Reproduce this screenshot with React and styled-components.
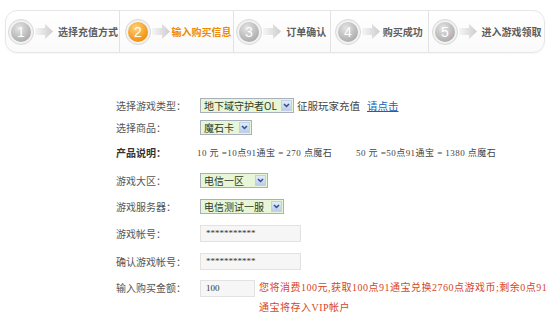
import React from "react";
import styled, { createGlobalStyle } from "styled-components";

const GlobalStyle = createGlobalStyle`
  body {
    margin: 0;
    background: #fff;
    font-family: "Noto Sans CJK SC", "Noto Sans", sans-serif;
  }
`;

const Page = styled.div`
  width: 557px;
  height: 321px;
  overflow: hidden;
  padding-top: 10px;
  box-sizing: border-box;
`;

const StepBar = styled.div`
  display: flex;
  margin-left: 5px;
  width: 540px;
  height: 43px;
  box-sizing: border-box;
  border: 1px solid #e6e6e6;
  border-radius: 12px;
  background: linear-gradient(#ffffff, #fafafa);
  box-shadow: 0 1px 2px rgba(0, 0, 0, 0.04);
`;

const Step = styled.div`
  display: flex;
  align-items: center;
  width: ${(p) => p.w}px;
  padding-left: ${(p) => p.pad}px;
  box-sizing: border-box;
  border-left: ${(p) => (p.first ? "none" : "1px solid #e2e2e2")};
`;

const StepText = styled.span`
  font-size: 10px;
  font-weight: bold;
  color: ${(p) => (p.active ? "#f08a00" : "#5e5e5e")};
  white-space: nowrap;
`;

const ArrowWrap = styled.div`
  display: flex;
  width: ${(p) => p.w}px;
  padding-left: 1px;
`;

function Ball({ n, active }) {
  const id = `g${n}`;
  return (
    <svg width="26" height="26" viewBox="0 0 26 26">
      <defs>
        <radialGradient id={id} cx="40%" cy="30%" r="75%">
          <stop offset="0%" stopColor={active ? "#ffd27a" : "#e4e4e4"} />
          <stop offset="100%" stopColor={active ? "#ef8a00" : "#a8a8a8"} />
        </radialGradient>
      </defs>
      <circle cx="13" cy="13" r="12.5" fill="#f2f2f2" stroke="#d8d8d8" />
      <circle cx="13" cy="13" r="10" fill={`url(#${id})`} />
      <text
        x="13"
        y="18"
        textAnchor="middle"
        fontSize="14"
        fill="#fff"
        fontFamily="Liberation Sans, sans-serif"
      >
        {n}
      </text>
    </svg>
  );
}

function Arrow() {
  return (
    <svg width="18" height="15" viewBox="0 0 18 15">
      <defs>
        <linearGradient id="ar" x1="0" x2="1" y1="0" y2="0">
          <stop offset="0%" stopColor="#f6f6f6" />
          <stop offset="100%" stopColor="#cdcdcd" />
        </linearGradient>
      </defs>
      <polygon points="0,4 10,4 10,0 18,7.5 10,15 10,11 0,11" fill="url(#ar)" />
    </svg>
  );
}

const steps = [
  { n: 1, text: "选择充值方式", w: 113, pad: 2 },
  { n: 2, text: "输入购买信息", w: 115, pad: 5, active: true },
  { n: 3, text: "订单确认", w: 97, pad: 2 },
  { n: 4, text: "购买成功", w: 99, pad: 4 },
  { n: 5, text: "进入游戏领取", w: 116, pad: 3 },
];

const Form = styled.div`
  margin-top: 41px;
  padding-left: 116px;
  font-size: 10px;
  color: #555;
`;

const Row = styled.div`
  display: flex;
  align-items: ${(p) => (p.top ? "flex-start" : "center")};
  height: ${(p) => p.h}px;
  padding-top: ${(p) => p.pt || 0}px;
  box-sizing: border-box;
`;

const Label = styled.div`
  width: ${(p) => p.w || 84}px;
  flex-shrink: 0;
  white-space: nowrap;
  font-weight: ${(p) => (p.bold ? "bold" : "normal")};
  color: ${(p) => (p.bold ? "#333" : "#555")};
  line-height: ${(p) => (p.lh ? p.lh + "px" : "normal")};
`;

const Select = styled.div`
  display: flex;
  align-items: stretch;
  width: ${(p) => p.w}px;
  height: 15px;
  box-sizing: border-box;
  border: 1px solid #a7b0bb;
  background: #e6f6d6;
`;

const SelectText = styled.span`
  flex: 1;
  padding-left: 3px;
  font-size: 10px;
  line-height: 13px;
  color: #2e3a2a;
  white-space: nowrap;
  overflow: hidden;
`;

const SelectBtn = styled.span`
  width: 11px;
  margin: 1px;
  display: flex;
  align-items: center;
  justify-content: center;
  background: linear-gradient(#e2ebf8, #bccde8);
  border: 1px solid #c2cfe4;
  box-sizing: border-box;
`;

function Chevron() {
  return (
    <svg width="7" height="5" viewBox="0 0 7 5">
      <polyline points="1,1 3.5,3.5 6,1" fill="none" stroke="#2d4f8a" strokeWidth="1.5" />
    </svg>
  );
}

const Inline = styled.span`
  margin-left: 3px;
  font-size: 10.5px;
  color: #444;
  white-space: nowrap;
`;

const Link = styled.a`
  margin-left: 7px;
  font-size: 10.5px;
  color: #1c5fb8;
  text-decoration: underline;
  white-space: nowrap;
`;

const Desc = styled.span`
  font-family: "Liberation Serif", "Noto Sans CJK SC", serif;
  font-size: 9px;
  letter-spacing: 0.45px;
  color: #444;
  white-space: nowrap;
  width: ${(p) => p.w}px;
`;

const Input = styled.div`
  width: ${(p) => p.w}px;
  height: 17px;
  margin-top: ${(p) => p.mt || 0}px;
  flex-shrink: 0;
  box-sizing: border-box;
  border: 1px solid #e2e2e2;
  background: #f6f6f6;
  padding-left: 5px;
  font-family: "Liberation Serif", serif;
  font-size: 9px;
  line-height: 15px;
  color: #333;
`;

const Notice = styled.div`
  margin-left: 4px;
  font-family: "Liberation Serif", "Noto Sans CJK SC", serif;
  font-size: 10px;
  letter-spacing: 0.5px;
  line-height: 20px;
  color: #d6461c;
  white-space: nowrap;
`;

function Dropdown({ w, children }) {
  return (
    <Select w={w}>
      <SelectText>{children}</SelectText>
      <SelectBtn>
        <Chevron />
      </SelectBtn>
    </Select>
  );
}

export default function App() {
  return (
    <>
      <GlobalStyle />
      <Page>
        <StepBar>
          {steps.map((s, i) => (
            <Step key={s.n} w={s.w} pad={s.pad} first={i === 0}>
              <Ball n={s.n} active={s.active} />
              <ArrowWrap w={51 - 26 - s.pad}>
                <Arrow />
              </ArrowWrap>
              <StepText active={s.active}>{s.text}</StepText>
            </Step>
          ))}
        </StepBar>

        <Form>
          <Row h={22}>
            <Label>选择游戏类型：</Label>
            <Dropdown w={94}>地下域守护者OL</Dropdown>
            <Inline>征服玩家充值</Inline>
            <Link>请点击</Link>
          </Row>
          <Row h={22}>
            <Label>选择商品：</Label>
            <Dropdown w={52}>魔石卡</Dropdown>
          </Row>
          <Row h={28}>
            <Label w={81} bold>
              产品说明：
            </Label>
            <Desc w={159}>10 元 =10点91通宝 = 270 点魔石</Desc>
            <Desc>50 元 =50点91通宝 = 1380 点魔石</Desc>
          </Row>
          <Row h={28}>
            <Label>游戏大区：</Label>
            <Dropdown w={68}>电信一区</Dropdown>
          </Row>
          <Row h={25}>
            <Label>游戏服务器：</Label>
            <Dropdown w={84}>电信测试一服</Dropdown>
          </Row>
          <Row h={29}>
            <Label>游戏帐号：</Label>
            <Input w={101}>***********</Input>
          </Row>
          <Row h={26}>
            <Label>确认游戏帐号：</Label>
            <Input w={101}>***********</Input>
          </Row>
          <Row h={47} top pt={4}>
            <Label lh={20}>输入购买金额：</Label>
            <Input w={55} mt={2}>
              100
            </Input>
            <Notice>
              您将消费100元,获取100点91通宝兑换2760点游戏币;剩余0点91
              <br />
              通宝将存入VIP帐户
            </Notice>
          </Row>
        </Form>
      </Page>
    </>
  );
}
